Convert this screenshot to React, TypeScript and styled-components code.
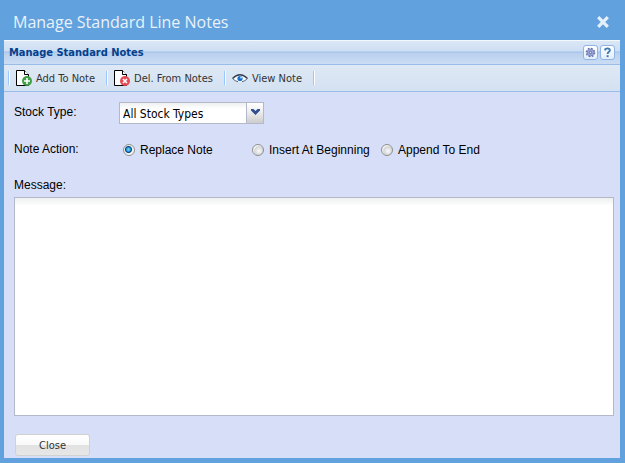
import React, { useState } from "react";
import styled, { createGlobalStyle } from "styled-components";

const GlobalStyle = createGlobalStyle`
  *, *::before, *::after { box-sizing: border-box; }
  html, body, #root { height: 100%; }
  body { margin: 0; background: #60a1de; }
  button, input, select, textarea { font: inherit; margin: 0; }
`;

const uiFont = `"DejaVu Sans Condensed", "DejaVu Sans", Tahoma, sans-serif`;

const Window = styled.div`
  display: flex;
  flex-direction: column;
  min-height: 100%;
  padding: 0 5px 5px 4px;
  background: #60a1de;
  font: 12px/16px "Liberation Sans", Arial, sans-serif;
  color: #000;
`;

const TitleBar = styled.header`
  display: flex;
  align-items: center;
  justify-content: space-between;
  height: 40px;
  padding: 4px 10px 0 9px;
`;

const Title = styled.h1`
  margin: 0;
  font: 400 16px/24px "Open Sans", sans-serif;
  color: #eaf1f9;
`;

const CloseIconButton = styled.button`
  display: flex;
  padding: 0;
  border: 0;
  background: none;
  cursor: pointer;
`;

const Panel = styled.main`
  display: flex;
  flex-direction: column;
  flex: 1;
  background: #d7dff8;
`;

const PanelHeader = styled.div`
  display: flex;
  align-items: center;
  justify-content: space-between;
  height: 25px;
  padding: 0 5px;
  border-top: 1px solid #f3f8fc;
  border-bottom: 1px solid #99bce8;
  background: linear-gradient(#dae7f6, #cddef3 45%, #abc7ec 46%, #abc7ec 50%, #b8cfee 51%, #cbddf3);
`;

const PanelTitle = styled.h2`
  margin: 0;
  font: 700 11px/16px ${uiFont};
  color: #04408c;
`;

const Tools = styled.div`
  display: flex;
  gap: 2px;
`;

const ToolButton = styled.button`
  display: flex;
  align-items: center;
  justify-content: center;
  width: 15px;
  height: 15px;
  padding: 0;
  border: 1px solid #8eb4e6;
  border-radius: 3px;
  background: linear-gradient(#fff, #e3edfa);
  cursor: pointer;
`;

const Toolbar = styled.div`
  display: flex;
  align-items: center;
  height: 27px;
  padding-left: 4px;
  border-bottom: 1px solid #99bce8;
  background: linear-gradient(#dfe9f5, #d3e1f1);
`;

const Separator = styled.span`
  width: 2px;
  height: 14px;
  border-left: 1px solid #98c8ff;
  border-right: 1px solid #fff;
`;

const ToolbarButton = styled.button`
  display: flex;
  align-items: center;
  gap: 4px;
  padding: 0 11px 0 6px;
  border: 0;
  background: none;
  font: 11px/16px ${uiFont};
  color: #333;
  white-space: nowrap;
  cursor: pointer;
`;

const ButtonText = styled.span`
  padding-top: 2px;
`;

const Form = styled.form`
  display: flex;
  flex-direction: column;
  flex: 1;
  padding: 10px 6px 2px 10px;
`;

const Row = styled.div`
  display: grid;
  grid-template-columns: 105px 1fr;
  align-items: start;
  min-height: 37px;
`;

const Label = styled.label`
  padding-top: 2px;
`;

const GroupLabel = styled.span`
  padding-top: 2px;
`;

const Combo = styled.div`
  display: grid;
  width: 145px;
  height: 22px;
  border: 1px solid #b5b8c8;
  background: linear-gradient(#edf1ef, #fff 6px);
`;

const Select = styled.select`
  grid-area: 1 / 1;
  width: 100%;
  padding: 2px 20px 0 3px;
  border: 0;
  appearance: none;
  background: transparent;
  font: 12px/16px ${uiFont};
  color: #000;
`;

const ComboTrigger = styled.span`
  grid-area: 1 / 1;
  justify-self: end;
  display: flex;
  align-items: center;
  justify-content: center;
  width: 17px;
  padding-bottom: 2px;
  border-left: 1px solid #b5b8c8;
  background: linear-gradient(#fff, #eeeeee 45%, #cccccc);
  pointer-events: none;
`;

const Choices = styled.div`
  display: grid;
  grid-template-columns: 129px 129px 1fr;
  padding: 3px 0 0 4px;
`;

const Choice = styled.label`
  display: flex;
  align-items: center;
  gap: 5px;
  white-space: nowrap;
`;

const Radio = styled.input`
  appearance: none;
  width: 12px;
  height: 12px;
  border: 1px solid #8e8f8f;
  border-radius: 50%;
  background: radial-gradient(circle at 60% 60%, #f4f4f4 10%, #d3d5d8 50%, #f4f4f4 64%);

  &:checked {
    background: radial-gradient(circle at 45% 45%, #7fdcff 0, #2398d6 2px, #0c4273 3px, #eef1f4 4px, #f6f6f6 5px);
  }
`;

const MessageLabel = styled.label`
  padding: 1px 0 4px;
`;

const Message = styled.textarea`
  display: block;
  flex: 1;
  width: 100%;
  min-height: 120px;
  padding: 4px;
  border: 1px solid #b5b8c8;
  border-radius: 0;
  background: linear-gradient(#edf0ee, #fff 8px);
  resize: none;
`;

const Footer = styled.div`
  display: flex;
  padding: 18px 1px 0;
`;

const CloseButton = styled.button`
  width: 75px;
  height: 22px;
  padding: 2px 0 0;
  border: 1px solid #d1d1d1;
  border-radius: 3px;
  background: linear-gradient(#fff, #f9f9f9 48%, #e2e2e2 52%, #e7e7e7);
  font: 11px/16px ${uiFont};
  color: #333;
  cursor: pointer;
`;

function NoteIcon({ kind }: { kind: "add" | "delete" }) {
  return (
    <svg width="16" height="16" viewBox="0 0 16 16" aria-hidden="true">
      <path d="M.5.5h8l4 4v11H.5z" fill="#fff" stroke="#000" />
      <path d="M8.5.5v4h4" fill="#fff" stroke="#000" />
      <path d="M10.5 2.5l1 1" stroke="#fff" />
      <circle cx="11" cy="11" r="5" fill={kind === "add" ? "#43a047" : "#e44b55"} />
      {kind === "add" ? (
        <path d="M11 8v6M8 11h6" stroke="#fff" strokeWidth="1.6" />
      ) : (
        <path d="M9 9l4 4M13 9l-4 4" stroke="#fff" strokeWidth="1.6" />
      )}
    </svg>
  );
}

function EyeIcon() {
  return (
    <svg width="16" height="16" viewBox="0 0 16 16" aria-hidden="true">
      <path d="M1 8.5Q8 1.5 15 8.5Q8 15 1 8.5z" fill="#fff" />
      <path d="M.5 8.5Q8 1 15.5 8.5" fill="none" stroke="#35414f" strokeWidth="1.3" />
      <path d="M.5 8.5Q3 11.2 6 11.7M10 11.7Q13 11.2 15.5 8.5" fill="none" stroke="#57677a" />
      <circle cx="8" cy="8.5" r="2.6" fill="#1471d0" />
      <circle cx="9" cy="7.5" r="1" fill="#b9dcff" />
    </svg>
  );
}

function GearIcon() {
  return (
    <svg width="11" height="11" viewBox="0 0 11 11" aria-hidden="true">
      <circle cx="5.5" cy="5.5" r="4" fill="none" stroke="#5f6ca8" strokeWidth="1.6" strokeDasharray="1.7 1.44" />
      <circle cx="5.5" cy="5.5" r="3.4" fill="#9ba6d9" stroke="#7480bb" strokeWidth=".8" />
      <circle cx="5.5" cy="5.5" r="1.2" fill="#e5eafa" stroke="#4f5b96" strokeWidth=".9" />
    </svg>
  );
}

function HelpIcon() {
  return (
    <svg width="11" height="11" viewBox="0 0 11 11" aria-hidden="true">
      <path d="M3.2 3.6V2.3Q5.5.5 7.4 2Q8.5 3.4 7 4.7Q5.6 5.6 5.6 7" fill="none" stroke="#3a78b4" strokeWidth="1.8" />
      <path d="M4.6 8.2h2v1.9h-2z" fill="#3a78b4" />
    </svg>
  );
}

const actions = ["Replace Note", "Insert At Beginning", "Append To End"];

export default function App() {
  const [action, setAction] = useState(actions[0]);
  const [message, setMessage] = useState("");

  return (
    <>
      <GlobalStyle />
      <Window>
        <TitleBar>
          <Title>Manage Standard Line Notes</Title>
          <CloseIconButton type="button" aria-label="Close window">
            <svg width="14" height="14" viewBox="0 0 14 14" aria-hidden="true">
              <path d="M2.2 2.2l9.6 9.6M11.8 2.2l-9.6 9.6" stroke="#e6f0fa" strokeWidth="3.2" />
            </svg>
          </CloseIconButton>
        </TitleBar>
        <Panel>
          <PanelHeader>
            <PanelTitle>Manage Standard Notes</PanelTitle>
            <Tools>
              <ToolButton type="button" aria-label="Settings"><GearIcon /></ToolButton>
              <ToolButton type="button" aria-label="Help"><HelpIcon /></ToolButton>
            </Tools>
          </PanelHeader>
          <Toolbar role="toolbar">
            <Separator />
            <ToolbarButton type="button"><NoteIcon kind="add" /><ButtonText>Add To Note</ButtonText></ToolbarButton>
            <Separator />
            <ToolbarButton type="button"><NoteIcon kind="delete" /><ButtonText>Del. From Notes</ButtonText></ToolbarButton>
            <Separator />
            <ToolbarButton type="button"><EyeIcon /><ButtonText>View Note</ButtonText></ToolbarButton>
            <Separator />
          </Toolbar>
          <Form onSubmit={(e) => e.preventDefault()}>
            <Row>
              <Label htmlFor="stock-type">Stock Type:</Label>
              <Combo>
                <Select id="stock-type" defaultValue="all">
                  <option value="all">All Stock Types</option>
                </Select>
                <ComboTrigger>
                  <svg width="9" height="6" viewBox="0 0 9 6" aria-hidden="true">
                    <path d="M0 0h2.5l2 2 2-2H9v1.5L4.5 6 0 1.5z" fill="#2f4f8f" />
                  </svg>
                </ComboTrigger>
              </Combo>
            </Row>
            <Row role="radiogroup" aria-labelledby="note-action">
              <GroupLabel id="note-action">Note Action:</GroupLabel>
              <Choices>
                {actions.map((name) => (
                  <Choice key={name}>
                    <Radio
                      type="radio"
                      name="note-action"
                      checked={action === name}
                      onChange={() => setAction(name)}
                    />
                    {name}
                  </Choice>
                ))}
              </Choices>
            </Row>
            <MessageLabel htmlFor="message">Message:</MessageLabel>
            <Message id="message" value={message} onChange={(e) => setMessage(e.target.value)} />
            <Footer>
              <CloseButton type="button">Close</CloseButton>
            </Footer>
          </Form>
        </Panel>
      </Window>
    </>
  );
}
